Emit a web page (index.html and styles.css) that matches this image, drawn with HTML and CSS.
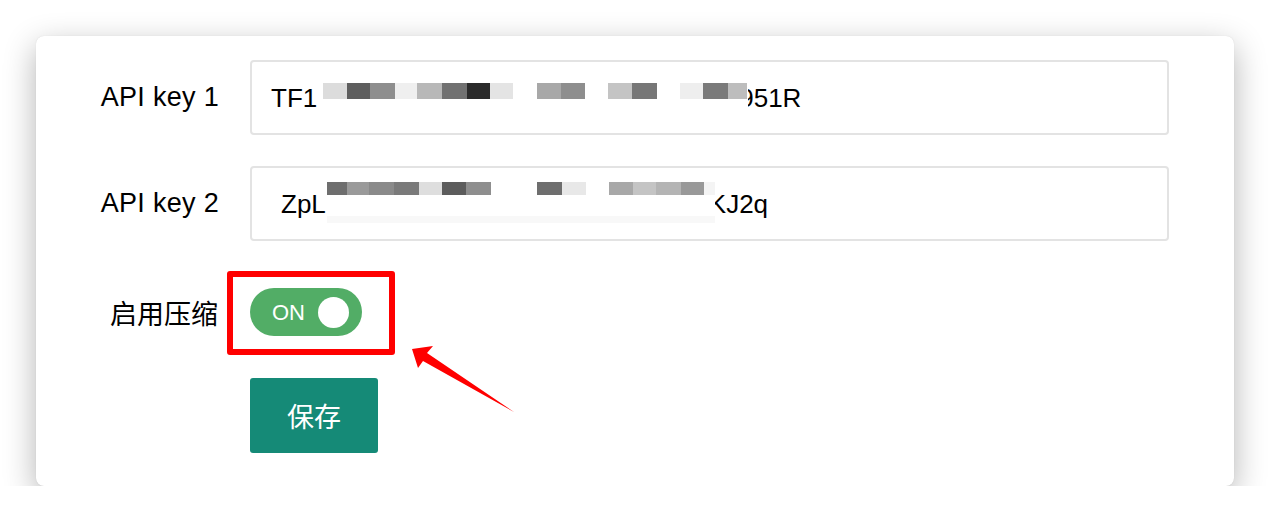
FILE: index.html
```html
<!DOCTYPE html>
<html lang="zh-CN">
<head>
<meta charset="utf-8">
<title>API 设置</title>
<link rel="stylesheet" href="styles.css">
</head>
<body>
<div class="card">
  <div class="row row-key">
    <label class="label">API key 1</label>
    <div class="field">
      <span class="val">TF1</span>
      <span class="mosaic mosaic-1">
        <span class="cells">
          <i style="width:24px;background:#dcdcdc"></i><i style="width:23px;background:#5e5e5e"></i><i style="width:25px;background:#8e8e8e"></i><i style="width:22px;background:#efefef"></i><i style="width:25px;background:#b8b8b8"></i><i style="width:25px;background:#717171"></i><i style="width:23px;background:#2a2a2a"></i><i style="width:23px;background:#e4e4e4"></i><i style="width:24px;background:#fff"></i><i style="width:24px;background:#a8a8a8"></i><i style="width:24px;background:#8e8e8e"></i><i style="width:23px;background:#fff"></i><i style="width:24px;background:#c4c4c4"></i><i style="width:25px;background:#777"></i><i style="width:23px;background:#fff"></i><i style="width:23px;background:#eee"></i><i style="width:25px;background:#7a7a7a"></i><i style="width:19px;background:#bdbdbd"></i>
        </span>
      </span>
      <span class="val">951R</span>
    </div>
  </div>
  <div class="row row-key row-key2">
    <label class="label">API key 2</label>
    <div class="field">
      <span class="val lead">ZpL</span>
      <span class="mosaic mosaic-2">
        <span class="cells">
          <i style="width:20px;background:#6e6e6e"></i><i style="width:22px;background:#9a9a9a"></i><i style="width:25px;background:#8a8a8a"></i><i style="width:25px;background:#7a7a7a"></i><i style="width:23px;background:#dedede"></i><i style="width:24px;background:#5c5c5c"></i><i style="width:25px;background:#8e8e8e"></i><i style="width:46px;background:#fff"></i><i style="width:25px;background:#6e6e6e"></i><i style="width:24px;background:#e8e8e8"></i><i style="width:23px;background:#fff"></i><i style="width:24px;background:#a8a8a8"></i><i style="width:23px;background:#c4c4c4"></i><i style="width:25px;background:#b4b4b4"></i><i style="width:23px;background:#999"></i><i style="width:11px;background:#f4f4f4"></i>
        </span>
        <span class="strip"></span>
      </span>
      <span class="val">KJ2q</span>
    </div>
  </div>
  <div class="row row-toggle">
    <label class="label label-cjk">启用压缩</label>
    <div class="toggle-wrap">
      <div class="toggle">
        <span class="toggle-text">ON</span>
        <span class="knob"></span>
      </div>
      <div class="highlight"></div>
    </div>
  </div>
  <div class="row row-btn">
    <span class="label"></span>
    <button class="btn">保存</button>
  </div>
  <svg class="arrow" width="160" height="90" viewBox="0 0 160 90">
    <polygon points="0,3 21,0 15,7 102,66 11,15 6,22" fill="#ff0000"/>
  </svg>
</div>
</body>
</html>
```

FILE: styles.css
```css
html, body {
  margin: 0;
  padding: 0;
  background: #ffffff;
}

body {
  font-family: "Liberation Sans", Arial, "Noto Sans CJK SC", sans-serif;
  color: #000;
}

.card {
  position: relative;
  margin: 36px 0 0 36px;
  width: 1198px;
  height: 450px;
  box-sizing: border-box;
  background: #fff;
  border-radius: 8px;
  box-shadow: 0 10px 32px rgba(0, 0, 0, 0.3), 0 0 1px rgba(0, 0, 0, 0.15);
  padding-top: 24px;
  display: flex;
  flex-direction: column;
}

.row {
  display: flex;
  align-items: center;
  column-gap: 31px;
}

.row-key2 { margin-top: 31px; }
.row-toggle { margin-top: 47px; }
.row-btn { margin-top: 42px; }

.label {
  width: 183px;
  flex: none;
  text-align: right;
  font-size: 27px;
  letter-spacing: 0.3px;
  line-height: 1;
}

.label-cjk {
  font-family: "Noto Sans CJK SC", sans-serif;
  font-size: 27px;
  letter-spacing: 0;
  padding-right: 1px;
  box-sizing: border-box;
}

.field {
  width: 919px;
  height: 75px;
  box-sizing: border-box;
  border: 2px solid #e3e3e3;
  border-radius: 4px;
  padding-left: 19px;
  display: flex;
  align-items: center;
  font-size: 26px;
  white-space: nowrap;
}

.val {
  line-height: 1;
}

.lead { margin-left: 10px; }

.mosaic {
  position: relative;
  z-index: 1;
  background: #fff;
  display: flex;
  flex-direction: column;
}

.mosaic-1 {
  width: 425px;
  height: 36px;
  margin-left: 6px;
  margin-right: -9px;
  padding-top: 3px;
  box-sizing: border-box;
}

.mosaic-1 .cells { height: 16px; }

.mosaic-2 {
  width: 388px;
  height: 44px;
  margin-left: 1px;
  margin-right: -6px;
  box-sizing: border-box;
}

.mosaic-2 .cells { height: 13px; }

.cells {
  display: flex;
}

.cells i {
  display: block;
  height: 100%;
}

.strip {
  margin-top: 21px;
  height: 7px;
  background: #f8f8f8;
}

.toggle-wrap {
  position: relative;
}

.toggle {
  width: 112px;
  height: 48px;
  border-radius: 24px;
  background: #52ad66;
  display: flex;
  align-items: center;
  justify-content: space-between;
  padding: 0 13px 0 22px;
  box-sizing: border-box;
}

.toggle-text {
  color: #fff;
  font-size: 22px;
  line-height: 1;
  margin-top: 2px;
}

.knob {
  width: 31px;
  height: 31px;
  border-radius: 50%;
  background: #fff;
}

.highlight {
  position: absolute;
  left: -23px;
  top: -17px;
  width: 168px;
  height: 84px;
  box-sizing: border-box;
  border: 6px solid #ff0000;
  border-radius: 3px;
}

.btn {
  width: 128px;
  height: 75px;
  border: none;
  border-radius: 3px;
  background: #158a77;
  color: #fff;
  font-family: "Noto Sans CJK SC", sans-serif;
  font-size: 27px;
  padding: 0;
  cursor: pointer;
}

.arrow {
  position: absolute;
  left: 376px;
  top: 310px;
}
```
